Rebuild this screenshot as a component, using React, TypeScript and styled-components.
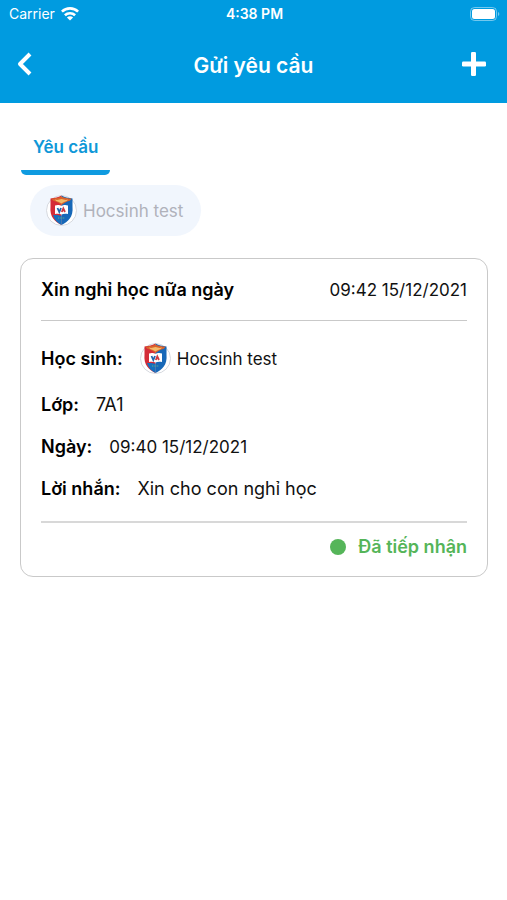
import React from "react";
import styled, { createGlobalStyle } from "styled-components";

const GlobalStyle = createGlobalStyle`
  * { box-sizing: border-box; }
  body {
    margin: 0;
    background: #fff;
    color: #111;
    font-family: Inter, "Noto Sans", sans-serif;
    font-size: 18px;
    line-height: 24px;
  }
  button { font: inherit; border: 0; padding: 0; background: none; cursor: pointer; }
  svg { display: block; flex: none; }
  h1, h2, dl, dt, dd, p { margin: 0; font: inherit; }
`;

const Header = styled.header`
  background: #009be0;
  color: #fff;
`;

const StatusBar = styled.div`
  display: grid;
  grid-template-columns: 1fr auto 1fr;
  align-items: center;
  height: 28px;
  padding: 0 7px 0 9px;
  font-size: 14px;
`;

const Carrier = styled.div`
  display: flex;
  align-items: center;
  gap: 6px;
`;

const Clock = styled.time`
  font-weight: 600;
`;

const BatterySlot = styled.div`
  display: flex;
  justify-content: flex-end;
`;

const NavBar = styled.nav`
  display: grid;
  grid-template-columns: 1fr auto 1fr;
  align-items: center;
  height: 75px;
  padding: 0 20px 0 16px;
`;

const IconButton = styled.button<{ $end?: boolean }>`
  justify-self: ${(p) => (p.$end ? "end" : "start")};
  padding-bottom: 3px;
  color: #fff;
`;

const Title = styled.h1`
  padding-left: 4px;
  font-size: 21px;
  font-weight: 600;
`;

const Main = styled.main`
  padding: 32px 19px 32px 20px;
`;

const Tab = styled.button`
  display: block;
  padding: 0 13px;
  color: #0f98d8;
  font-size: 17px;
  font-weight: 600;

  &::after {
    content: "";
    display: block;
    height: 5px;
    margin: 11px -12px 0;
    border-radius: 0 0 6px 6px;
    background: #0f9be0;
  }
`;

const Chip = styled.button`
  display: flex;
  align-items: center;
  gap: 6px;
  height: 51px;
  margin: 10px 0 22px 10px;
  padding: 0 18px 0 16px;
  border-radius: 26px;
  background: #f1f6fd;
  color: #b0b2bb;
  font-size: 17px;
`;

const Card = styled.article`
  padding: 19px 20px 17px;
  border: 1px solid #c9c9c9;
  border-radius: 13px;
`;

const CardHead = styled.header`
  display: flex;
  justify-content: space-between;
  padding-bottom: 18px;
  border-bottom: 1px solid #c9c9c9;
`;

const CardTitle = styled.h2`
  color: #000;
  font-weight: 600;
`;

const Timestamp = styled.time`
  font-size: 17px;
`;

const Details = styled.dl`
  display: grid;
  gap: 18px;
  padding: 21px 0 20px;
`;

const Detail = styled.div<{ $tall?: boolean }>`
  display: flex;
  align-items: center;
  gap: 17px;
  min-height: ${(p) => (p.$tall ? 33 : 24)}px;
`;

const Label = styled.dt`
  color: #000;
  font-weight: 600;
`;

const Value = styled.dd<{ $small?: boolean }>`
  display: flex;
  align-items: center;
  gap: 6px;
  font-size: ${(p) => (p.$small ? 17 : 18)}px;
`;

const CardFoot = styled.footer`
  display: flex;
  align-items: center;
  justify-content: flex-end;
  gap: 12px;
  padding-top: 12px;
  border-top: 2px solid #d8d8d8;
  color: #55b559;
  font-weight: 600;
`;

const Dot = styled.span`
  width: 16px;
  height: 16px;
  border-radius: 50%;
  background: #55b559;
`;

const Wifi = () => (
  <svg width="18" height="14" viewBox="0 0 18 14" fill="none" stroke="#fff" strokeWidth="2.6" aria-hidden="true">
    <path d="M.9 4.700C5.400.2 12.600.2 17.100 4.700" />
    <path d="M3.900 8.300c2.900-2.800 7.300-2.800 10.200 0" />
    <path d="M9 13.500 5.900 10.500c1.800-1.600 4.400-1.600 6.200 0Z" fill="#fff" stroke="none" />
  </svg>
);

const Battery = () => (
  <svg width="30" height="14" viewBox="0 0 30 14" aria-hidden="true">
    <rect x=".5" y=".5" width="26" height="13" rx="4" fill="none" stroke="#fff" strokeOpacity=".45" />
    <rect x="2" y="2" width="23" height="10" rx="2.5" fill="#fff" />
    <path d="M28 5v4c1.800-.6 1.800-3.400 0-4Z" fill="#fff" fillOpacity=".45" />
  </svg>
);

const Back = () => (
  <svg width="17" height="24" viewBox="0 0 17 24" fill="none" stroke="#fff" strokeWidth="4" aria-hidden="true">
    <path d="M14 2 4 12l10 10" strokeLinejoin="round" />
  </svg>
);

const Plus = () => (
  <svg width="26" height="24" viewBox="0 0 26 24" aria-hidden="true">
    <rect x="10" y="0" width="5" height="24" rx="1.2" fill="#fff" />
    <rect x="1" y="9.500" width="24" height="5" rx="1.2" fill="#fff" />
  </svg>
);

const Crest = () => (
  <svg width="31" height="31" viewBox="0 0 31 31" aria-hidden="true">
    <circle cx="15.5" cy="15.5" r="15" fill="#fff" stroke="#d6d9df" />
    <path d="M4.500 3.500C9 2.500 12 2.500 15.500 .5v29.500C9 27 3.500 22 4.500 11.500Z" fill="#d42c38" />
    <path d="M15.500 .5C19 2.500 22 2.500 26.500 3.500v8C27.500 22 22 27 15.500 30Z" fill="#1768b8" />
    <path d="M7 20c2 0 5-.5 8.500 1V30C11.500 28 8.500 25 7 20Z" fill="#166fbd" />
    <path d="M5.500 3.500c3.500 0 7-.5 10-2 3 1.500 6.500 2 10 2-1.500 3.500-5 2.500-7 4.500l-3 2-3-2c-2-2-5.500-1-7-4.500Z" fill="#d9622c" />
    <path d="M9 4.500c3 1.200 4.500-.5 6.500-.5s3.500 1.700 6.500.5c-1 2.500-3.500 1.500-6.500 4-3-2.500-5.500-1.500-6.500-4Z" fill="#f5bb69" />
    <path d="M9 10.500c2.500-1 5-.5 6.500.5 1.500-1 4-1.500 6.500-.5v8.500c-2.500-.7-5-.3-6.500.5-1.500-.8-4-1.200-6.500-.5Z" fill="#fff" />
    <path d="m11.500 13 1.800 4 1.700-4" fill="none" stroke="#2165ad" strokeWidth="1.800" />
    <path d="m15.800 17 1.500-3.500 1.700 3.500" fill="none" stroke="#ce3940" strokeWidth="1.800" />
    <path d="M12 23h7" stroke="#62a88c" strokeWidth="1.200" strokeDasharray="1 .7" />
  </svg>
);

const details = [
  { label: "Học sinh:", value: "Hocsinh test", crest: true, small: true },
  { label: "Lớp:", value: "7A1" },
  { label: "Ngày:", value: "09:40 15/12/2021", small: true },
  { label: "Lời nhắn:", value: "Xin cho con nghỉ học" },
];

export default function App() {
  return (
    <>
      <GlobalStyle />
      <Header>
        <StatusBar>
          <Carrier>Carrier <Wifi /></Carrier>
          <Clock>4:38 PM</Clock>
          <BatterySlot><Battery /></BatterySlot>
        </StatusBar>
        <NavBar>
          <IconButton aria-label="Quay lại"><Back /></IconButton>
          <Title>Gửi yêu cầu</Title>
          <IconButton $end aria-label="Thêm yêu cầu"><Plus /></IconButton>
        </NavBar>
      </Header>
      <Main>
        <Tab>Yêu cầu</Tab>
        <Chip><Crest />Hocsinh test</Chip>
        <Card>
          <CardHead>
            <CardTitle>Xin nghỉ học nữa ngày</CardTitle>
            <Timestamp>09:42 15/12/2021</Timestamp>
          </CardHead>
          <Details>
            {details.map((d) => (
              <Detail key={d.label} $tall={d.crest}>
                <Label>{d.label}</Label>
                <Value $small={d.small}>{d.crest && <Crest />}{d.value}</Value>
              </Detail>
            ))}
          </Details>
          <CardFoot><Dot />Đã tiếp nhận</CardFoot>
        </Card>
      </Main>
    </>
  );
}
